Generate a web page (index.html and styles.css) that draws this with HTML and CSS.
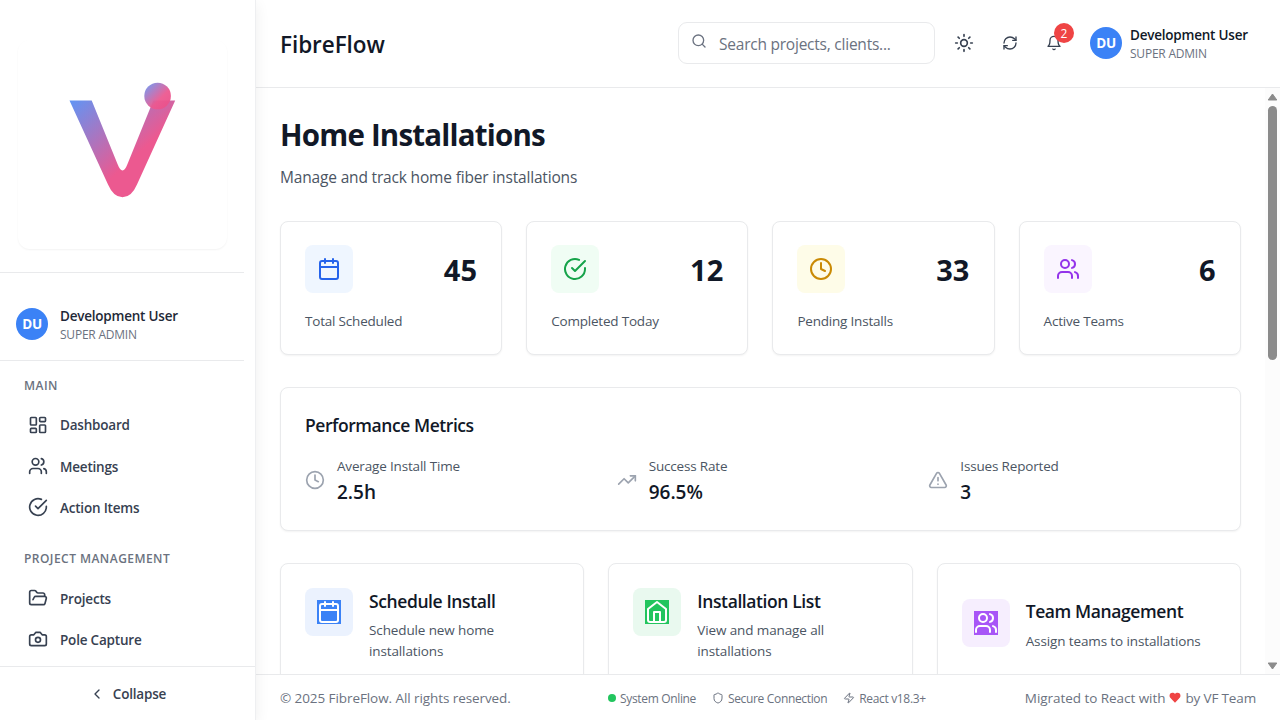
FILE: index.html
```html
<!DOCTYPE html>
<html lang="en">
<head>
<meta charset="utf-8">
<title>FibreFlow</title>
<link rel="stylesheet" href="styles.css">
</head>
<body>
<svg class="sprite" width="0" height="0">
  <symbol id="users" viewBox="0 0 24 24"><path d="M16 21v-2a4 4 0 0 0-4-4H6a4 4 0 0 0-4 4v2"/><circle cx="9" cy="7" r="4"/><path d="M22 21v-2a4 4 0 0 0-3-3.87"/><path d="M16 3.13a4 4 0 0 1 0 7.75"/></symbol>
  <symbol id="check" viewBox="0 0 24 24"><path d="M22 11.08V12a10 10 0 1 1-5.93-9.14"/><path d="m9 11 3 3L22 4"/></symbol>
  <symbol id="calendar" viewBox="0 0 24 24"><path d="M8 2v4M16 2v4"/><rect x="3" y="4" width="18" height="18" rx="2"/><path d="M3 10h18"/></symbol>
  <symbol id="clock" viewBox="0 0 24 24"><circle cx="12" cy="12" r="10"/><path d="M12 6v6l4 2"/></symbol>
</svg>
<div class="app">
  <aside class="sidebar">
    <div class="side-scroll">
      <div class="brand">
        <div class="logo-box">
          <svg class="logo" width="209" height="209" viewBox="18 39.500 209 209">
            <defs>
              <linearGradient id="lg" x1="0" y1="0" x2="1" y2="1"><stop offset="0" stop-color="#6095f5"/><stop offset=".6" stop-color="#ec5990"/><stop offset="1" stop-color="#ec5990"/></linearGradient>
              <linearGradient id="lc" x1="0" y1="0" x2="1" y2="1"><stop offset=".05" stop-color="#6d97f2"/><stop offset=".6" stop-color="#ec5990"/><stop offset="1" stop-color="#ec4d88"/></linearGradient>
            </defs>
            <path fill="url(#lg)" d="M69.5 100H91.7L117.5 163.500Q122.500 176.500 127.500 163.500L153.300 100H175.200L137 184Q131.500 196.800 122.500 196.800Q113.500 196.800 108 184Z"/>
            <circle cx="157.600" cy="95.500" r="13.300" fill="url(#lc)" opacity=".95"/>
          </svg>
        </div>
      </div>
      <div class="side-user">
        <span class="avatar">DU</span>
        <div><div class="uname">Development User</div><div class="urole">SUPER ADMIN</div></div>
      </div>
      <nav class="nav">
        <div class="group">MAIN</div>
        <a class="item"><svg class="i20"  viewBox="0 0 24 24"><rect x="3" y="3" width="7" height="9" rx="1"/><rect x="14" y="3" width="7" height="5" rx="1"/><rect x="14" y="12" width="7" height="9" rx="1"/><rect x="3" y="16" width="7" height="5" rx="1"/></svg><span>Dashboard</span></a>
        <a class="item"><svg class="i20"><use href="#users"/></svg><span>Meetings</span></a>
        <a class="item"><svg class="i20"><use href="#check"/></svg><span>Action Items</span></a>
        <div class="group second">PROJECT MANAGEMENT</div>
        <a class="item"><svg class="i20" viewBox="0 0 24 24"><path d="m6 14 1.450-2.900A2 2 0 0 1 9.240 10H20a2 2 0 0 1 1.940 2.500l-1.550 6a2 2 0 0 1-1.940 1.500H4a2 2 0 0 1-2-2V5c0-1.100.9-2 2-2h3.930a2 2 0 0 1 1.660.9l.82 1.200a2 2 0 0 0 1.660.9H18a2 2 0 0 1 2 2v2"/></svg><span>Projects</span></a>
        <a class="item"><svg class="i20" viewBox="0 0 24 24"><path d="M14.500 4h-5L7 7H4a2 2 0 0 0-2 2v9a2 2 0 0 0 2 2h16a2 2 0 0 0 2-2V9a2 2 0 0 0-2-2h-3l-2.500-3z"/><circle cx="12" cy="13" r="3"/></svg><span>Pole Capture</span></a>
      </nav>
    </div>
    <div class="collapse"><svg class="i16" viewBox="0 0 24 24"><path d="m15 18-6-6 6-6"/></svg><span>Collapse</span></div>
  </aside>
  <div class="page">
    <header class="header">
      <div class="title">FibreFlow</div>
      <div class="search"><svg class="i16" viewBox="0 0 24 24"><circle cx="11" cy="11" r="8"/><path d="m21 21-4.300-4.300"/></svg><span>Search projects, clients...</span></div>
      <div class="tools">
        <svg class="i20" viewBox="0 0 24 24"><circle cx="12" cy="12" r="4"/><path d="M12 2v2M12 20v2M4.930 4.930l1.410 1.410M17.660 17.660l1.410 1.410M2 12h2M20 12h2M6.340 17.660l-1.410 1.410M19.070 4.930l-1.410 1.410"/></svg>
        <svg class="i16" viewBox="0 0 24 24"><path d="M3 12a9 9 0 0 1 9-9 9.750 9.750 0 0 1 6.740 2.740L21 8"/><path d="M21 3v5h-5"/><path d="M21 12a9 9 0 0 1-9 9 9.750 9.750 0 0 1-6.740-2.740L3 16"/><path d="M8 16H3v5"/></svg>
        <div class="bell"><svg class="i16" viewBox="0 0 24 24"><path d="M6 8a6 6 0 0 1 12 0c0 7 3 9 3 9H3s3-2 3-9"/><path d="M10.300 21a1.940 1.940 0 0 0 3.400 0"/></svg><span class="badge">2</span></div>
      </div>
      <div class="head-user">
        <span class="avatar">DU</span>
        <div><div class="uname">Development User</div><div class="urole">SUPER ADMIN</div></div>
      </div>
    </header>
    <div class="body">
      <main class="main">
        <h1>Home Installations</h1>
        <p class="sub">Manage and track home fiber installations</p>
        <section class="stats">
          <div class="card"><div class="row"><span class="tile blue"><svg class="i24"><use href="#calendar"/></svg></span><b>45</b></div><p>Total Scheduled</p></div>
          <div class="card"><div class="row"><span class="tile green"><svg class="i24"><use href="#check"/></svg></span><b>12</b></div><p>Completed Today</p></div>
          <div class="card"><div class="row"><span class="tile yellow"><svg class="i24"><use href="#clock"/></svg></span><b>33</b></div><p>Pending Installs</p></div>
          <div class="card"><div class="row"><span class="tile purple"><svg class="i24"><use href="#users"/></svg></span><b>6</b></div><p>Active Teams</p></div>
        </section>
        <section class="card perf">
          <h2>Performance Metrics</h2>
          <div class="metrics">
            <div class="metric"><svg class="i20"><use href="#clock"/></svg><div><p>Average Install Time</p><strong>2.5h</strong></div></div>
            <div class="metric"><svg class="i20" viewBox="0 0 24 24"><path d="m22 7-8.500 8.500-5-5L2 17"/><path d="M16 7h6v6"/></svg><div><p>Success Rate</p><strong>96.5%</strong></div></div>
            <div class="metric"><svg class="i20" viewBox="0 0 24 24"><path d="m21.730 18-8-14a2 2 0 0 0-3.480 0l-8 14A2 2 0 0 0 4 21h16a2 2 0 0 0 1.730-3Z"/><path d="M12 9v4M12 17h.01"/></svg><div><p>Issues Reported</p><strong>3</strong></div></div>
          </div>
        </section>
        <section class="actions">
          <div class="card act"><span class="tile ablue"><svg class="i24"><use href="#calendar"/></svg></span><div><h3>Schedule Install</h3><p>Schedule new home installations</p></div></div>
          <div class="card act"><span class="tile agreen"><svg class="i24" viewBox="0 0 24 24"><path d="m3 9 9-7 9 7v11a2 2 0 0 1-2 2H5a2 2 0 0 1-2-2z"/><path d="M9 22V12h6v10"/></svg></span><div><h3>Installation List</h3><p>View and manage all installations</p></div></div>
          <div class="card act"><span class="tile apurple"><svg class="i24"><use href="#users"/></svg></span><div><h3>Team Management</h3><p>Assign teams to installations</p></div></div>
        </section>
      </main>
      <div class="scrollbar">
        <svg width="11" height="8" viewBox="0 0 11 8"><path d="M5.500 1 9.800 7H1.200Z"/></svg>
        <span class="thumb"></span>
        <svg class="down" width="11" height="8" viewBox="0 0 11 8"><path d="M5.500 7 9.800 1H1.200Z"/></svg>
      </div>
    </div>
    <footer class="footer">
      <span class="copy">© 2025 FibreFlow. All rights reserved.</span>
      <div class="status">
        <span class="st"><i class="dot"></i>System Online</span>
        <span class="st"><svg class="i12" viewBox="0 0 24 24"><path d="M20 13c0 5-3.500 7.500-7.660 8.950a1 1 0 0 1-.67-.01C7.500 20.500 4 18 4 13V6a1 1 0 0 1 1-1c2 0 4.500-1.200 6.240-2.720a1.170 1.170 0 0 1 1.520 0C14.510 3.810 17 5 19 5a1 1 0 0 1 1 1z"/></svg>Secure Connection</span>
        <span class="st"><svg class="i12" viewBox="0 0 24 24"><path d="M4 14a1 1 0 0 1-.78-1.630l9.900-10.200a.5.5 0 0 1 .86.460l-1.920 6.020A1 1 0 0 0 13 10h7a1 1 0 0 1 .78 1.630l-9.900 10.200a.5.5 0 0 1-.86-.46l1.920-6.020A1 1 0 0 0 11 14z"/></svg>React v18.3+</span>
      </div>
      <div class="made"><span>Migrated to React with</span><svg width="12" height="12" viewBox="1 2 22 21"><path d="M19 14c1.490-1.460 3-3.210 3-5.500A5.500 5.500 0 0 0 16.500 3c-1.760 0-3 .5-4.500 2-1.500-1.500-2.740-2-4.500-2A5.500 5.500 0 0 0 2 8.500c0 2.300 1.500 4.050 3 5.500l7 7Z"/></svg><span class="by">by VF Team</span></div>
    </footer>
  </div>
</div>
</body>
</html>
```
FILE: styles.css
```css
* { box-sizing: border-box; margin: 0; padding: 0; }
body { width: 1280px; height: 720px; overflow: hidden; background: #fff; color: #111827; font-family: "Open Sans", "Noto Sans", sans-serif; font-size: 14px; line-height: 21px; white-space: nowrap; }
.sprite { display: none; }
svg { display: block; flex: none; }
.i12, .i16, .i20, .i24 { fill: none; stroke: currentColor; stroke-width: 2; stroke-linecap: round; stroke-linejoin: round; }
.i12 { width: 12px; height: 12px; }
.i16 { width: 16px; height: 16px; }
.i20 { width: 20px; height: 20px; }
.i24 { width: 24px; height: 24px; }
.app { display: flex; height: 720px; }

.sidebar { width: 256px; flex: none; display: flex; flex-direction: column; border-right: 1px solid #eeeff1; box-shadow: 0 4px 14px rgba(0,0,0,.07); z-index: 1; background: #fff; }
.side-scroll { width: 244px; flex: 1; overflow: hidden; }
.brand { height: 273px; padding: 39.500px 0 0 18px; border-bottom: 1px solid #e9eaec; }
.logo-box { width: 209px; height: 209px; border-radius: 12px; box-shadow: 0 1px 2px rgba(0,0,0,.05); }
.side-user { height: 88px; padding: 33px 0 0 16px; display: flex; gap: 12px; border-bottom: 1px solid #e9eaec; }
.side-user .avatar { margin-top: 2px; }
.avatar { width: 32px; height: 32px; flex: none; border-radius: 50%; background: #3b82f6; color: #fff; font-weight: 700; font-size: 13.500px; line-height: 33px; text-align: center; letter-spacing: -.4px; }
.uname { font-size: 13.500px; font-weight: 600; line-height: 20px; letter-spacing: -.22px; color: #1f2937; }
.urole { font-size: 12px; line-height: 18px; letter-spacing: -.22px; color: #6b7280; }
.nav { padding-top: 15px; color: #374151; }
.group { padding-left: 24px; height: 20px; line-height: 20px; font-size: 12px; font-weight: 600; letter-spacing: .46px; color: #6b7280; margin-bottom: 9px; }
.group.second { margin-top: 20px; }
.item { display: flex; align-items: center; gap: 12px; height: 41.400px; padding-left: 28px; font-weight: 600; font-size: 13.500px; letter-spacing: -.2px; }
.item svg { margin-top: -2px; }
.group.second + .item span { padding-top: 1px; }
.collapse { height: 54px; border-top: 1px solid #e9eaec; display: flex; align-items: center; justify-content: center; gap: 8px; font-weight: 600; font-size: 13.500px; letter-spacing: -.18px; color: #374151; }
.collapse span { padding-top: 2px; }

.page { flex: 1; min-width: 0; display: flex; flex-direction: column; }
.header { height: 88px; border-bottom: 1px solid #e9eaec; padding: 0 31px 1px 24px; display: flex; align-items: center; color: #374151; }
.title { font-size: 22.500px; font-weight: 600; line-height: 32px; letter-spacing: -.06px; color: #111827; width: 398px; padding-top: 3px; }
.search { width: 257px; height: 42px; border: 1px solid #e9eaec; border-radius: 9px; display: flex; gap: 12px; padding: 0 12px; align-items: center; font-size: 15.500px; letter-spacing: -.23px; color: #6b7280; }
.search svg { margin-top: -4px; }
.search span { padding-top: 3px; }
.tools { display: flex; align-items: center; margin-left: 19px; gap: 28px; }
.bell { position: relative; }
.badge { position: absolute; left: 8px; top: -12px; width: 20px; height: 20px; border-radius: 50%; background: #ef4444; color: #fff; font-size: 12px; line-height: 21px; text-align: center; }
.head-user { margin-left: 28px; display: flex; gap: 8px; align-items: center; }
.head-user .uname { color: #111827; line-height: 18px; padding-top: 2px; }
.head-user .urole { line-height: 19px; }

.body { flex: 1; min-height: 0; display: flex; }
.main { width: 1009px; overflow: hidden; padding: 26px 24px 0; }
h1 { font-size: 29.500px; font-weight: 700; line-height: 41px; letter-spacing: -.8px; }
.sub { font-size: 15.500px; line-height: 24px; margin-top: 10px; letter-spacing: -.17px; color: #4b5563; }
.card { border: 1px solid #e9eaec; border-radius: 8px; box-shadow: 0 1px 2px rgba(0,0,0,.05); padding: 24px; background: #fff; }
.stats { display: grid; grid-template-columns: repeat(4, 1fr); gap: 24px; margin: 31.500px .25px 0 0; }
.stats .card { height: 134.500px; }
.row { display: flex; justify-content: space-between; align-items: center; }
.row b { font-size: 29px; line-height: 36px; margin-top: 2px; letter-spacing: .1px; }
.tile { width: 48px; height: 48px; border-radius: 8px; display: flex; align-items: center; justify-content: center; flex: none; }
.blue { background: #eff6ff; color: #2563eb; }
.green { background: #f0fdf4; color: #16a34a; }
.yellow { background: #fefce8; color: #ca8a04; }
.purple { background: #faf5ff; color: #9333ea; }
.row .tile { margin-top: -.5px; }
.stats p, .metric p, .act p { font-size: 13.500px; line-height: 21px; letter-spacing: -.2px; color: #4b5563; }
.stats p { margin-top: 17.500px; }
.perf { height: 144px; margin-top: 32px; }
h2 { font-size: 17.500px; font-weight: 600; line-height: 28px; letter-spacing: -.44px; margin-top: -1px; }
.metrics { display: grid; grid-template-columns: repeat(3, 1fr); gap: 24px; margin-top: 17px; }
.metric { display: flex; gap: 12px; align-items: center; color: #9ca3af; }
.metric svg { margin-top: -2px; }
.metric p { letter-spacing: -.17px; }
.metric strong { display: block; font-size: 19px; font-weight: 600; line-height: 27px; padding-top: 2px; letter-spacing: 0; color: #111827; }
.actions { display: grid; grid-template-columns: repeat(3, 1fr); gap: 24px; margin-top: 32px; }
.act { height: 125px; display: flex; gap: 16px; align-items: center; white-space: normal; }
.act .tile { align-self: flex-start; }
.act:last-child .tile { margin-top: 10.500px; }
h3 { font-size: 17.500px; font-weight: 600; line-height: 28px; letter-spacing: -.4px; margin: -3px 0 5px; }
.act svg { color: #fff; }
.act div { width: 175px; white-space: normal; }
.act p { letter-spacing: -.12px; }
.act:last-child div { white-space: nowrap; }
.act:last-child p { padding-top: 1px; }
.ablue { background: #ebf2fe; } .ablue svg { background: #3b82f6; }
.agreen { background: #e9f9ef; } .agreen svg { background: #22c55e; }
.apurple { background: #f6eefe; } .apurple svg { background: #a855f7; }
.scrollbar { width: 15px; background: #fcfcfc; display: flex; flex-direction: column; align-items: center; padding: 5px 0 4px; }
.scrollbar svg { fill: #8b8b8b; stroke: #8b8b8b; stroke-linejoin: round; }
.thumb { width: 9px; height: 254px; margin-top: 5px; border-radius: 5px; background: #8b8b8b; }
.scrollbar .down { margin-top: auto; }

.footer { height: 46px; border-top: 1px solid #e9eaec; padding: 2px 24px 0; display: flex; align-items: center; color: #6b7280; font-size: 13.500px; letter-spacing: -.08px; }
.copy { width: 328px; }
.status { display: flex; gap: 16px; font-size: 12px; letter-spacing: -.34px; width: 320px; }
.st { display: flex; align-items: center; gap: 4px; }
.st svg { margin-top: -2px; }
.dot { width: 8px; height: 8px; margin-top: -2px; border-radius: 50%; background: #22c55e; }
.made { margin-left: auto; display: flex; align-items: center; gap: 4px; letter-spacing: -.05px; }
.made svg { fill: #ef4444; margin-top: -2px; }
.by { letter-spacing: -.15px; }
```
